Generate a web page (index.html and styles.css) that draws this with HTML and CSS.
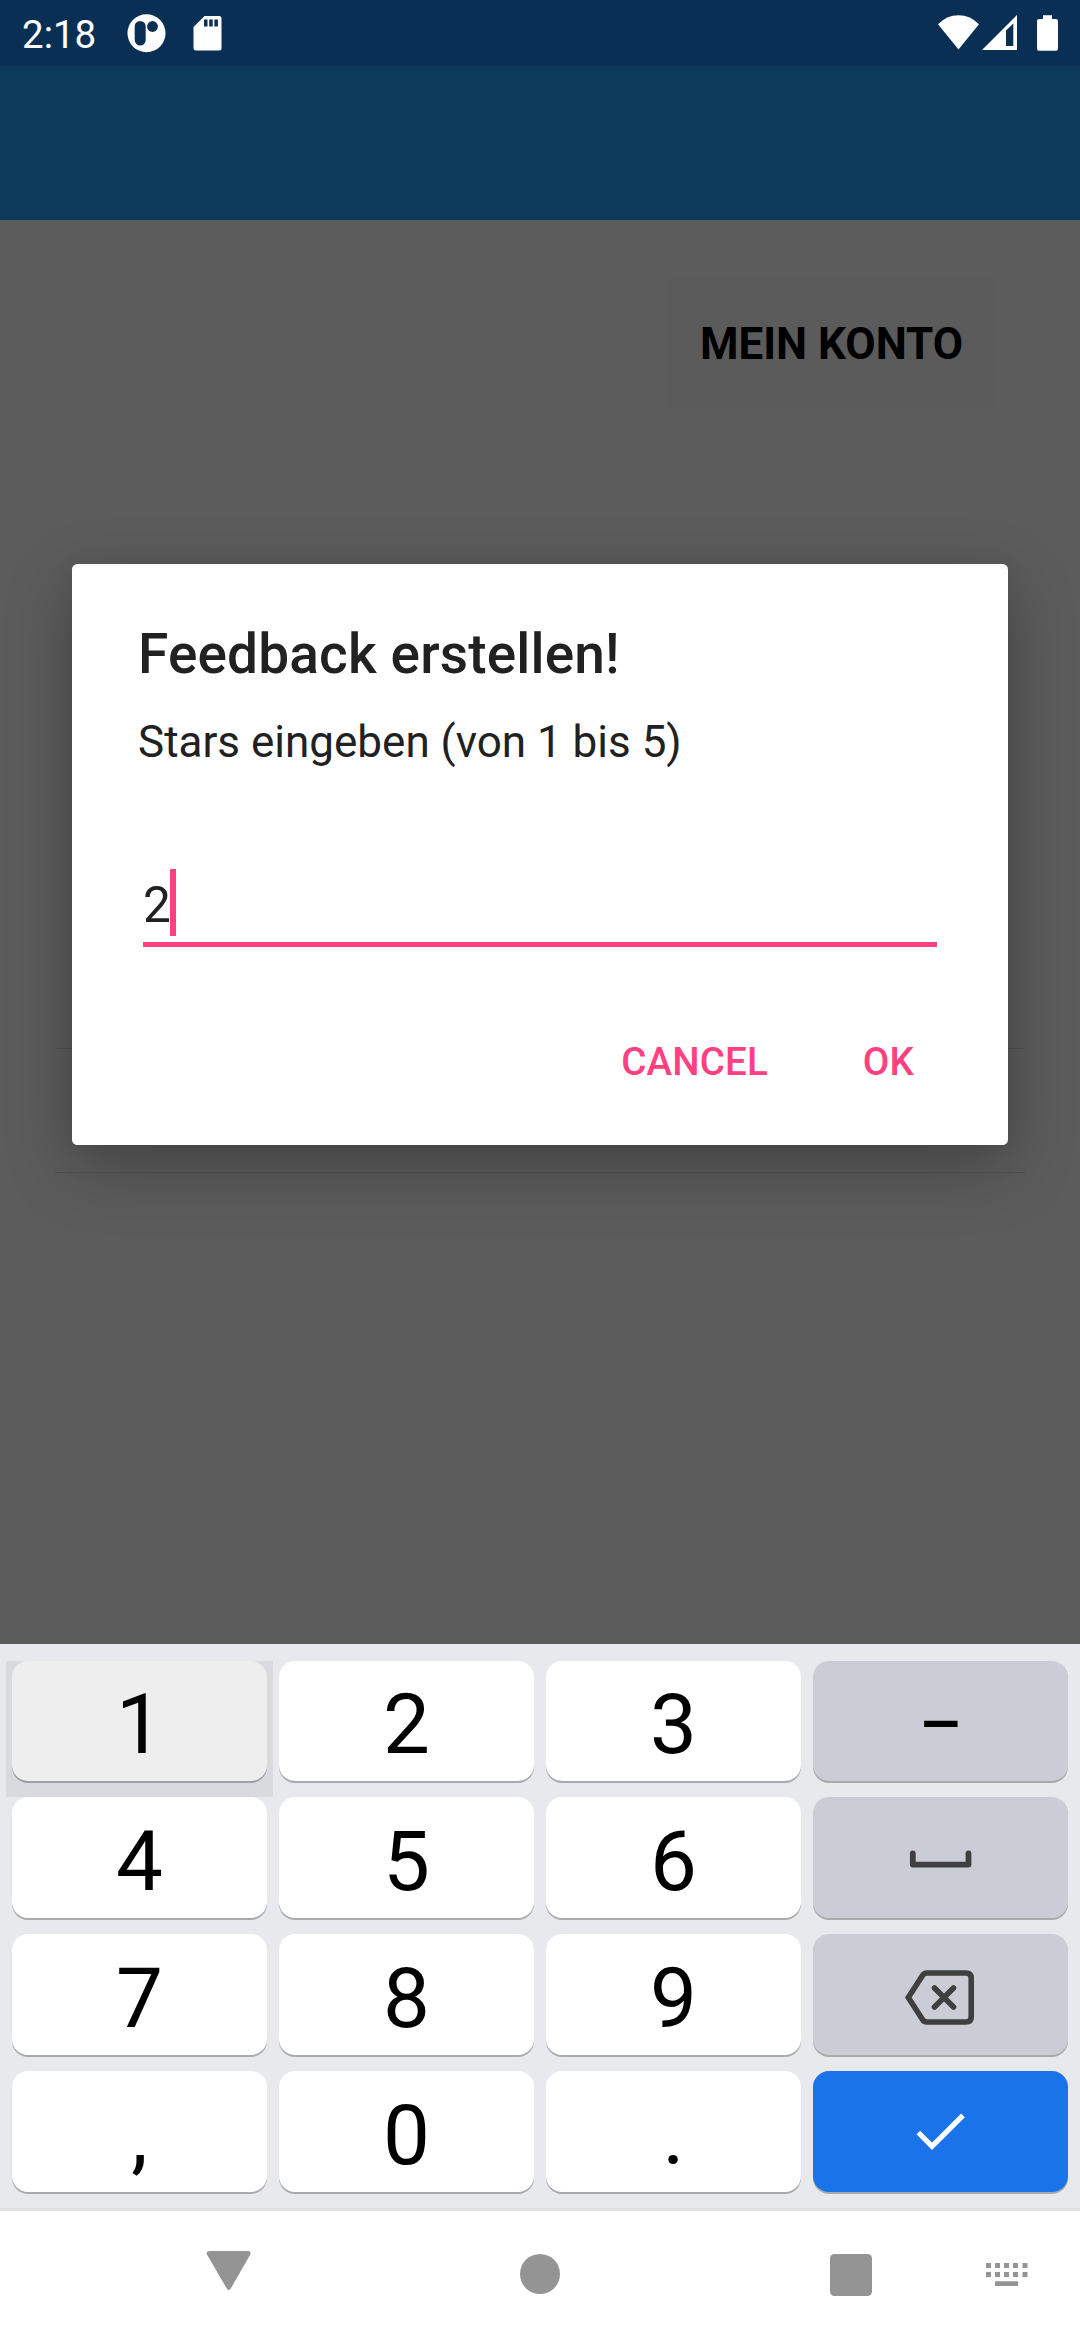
FILE: index.html
```html
<!DOCTYPE html>
<html lang="de">
<head>
<meta charset="utf-8">
<title>Feedback erstellen</title>
<link rel="stylesheet" href="styles.css">
</head>
<body>
<div class="screen">
  <header class="status-bar">
    <span class="clock">2:18</span>
    <svg class="icon-app" width="40" height="40" viewBox="126 13 40 40"><circle cx="146.5" cy="33.2" r="19" fill="#fff"/><rect x="134.7" y="21" width="11" height="24.5" rx="5.5" fill="#0a2f54"/><circle cx="152.5" cy="26.5" r="5.4" fill="#0a2f54"/></svg>
    <svg class="icon-sd" width="30" height="36" viewBox="193 15 30 36"><path d="M204.500 16H219Q221.500 16 221.500 18.500V48Q221.500 50.500 219 50.500H196Q193.500 50.500 193.500 48V27Z" fill="#fff"/><path d="M204 19.500h3.500v7H204zM209.200 19.500h3.500v7h-3.500zM214.400 19.500h3.500v7h-3.500z" fill="#0a2f54"/></svg>
    <svg class="icon-signals" width="124" height="38" viewBox="936 14 124 38"><path d="M958.500 49.500L938 24.300Q946.500 15.200 958.500 15.200T979 24.300Z" fill="#fff"/><path d="M982 50L1017 15V50Z" fill="#fff"/><path d="M1006 30.500L1013.300 23.500V46H1006Z" fill="#0a2f54"/><path d="M1043 15.200H1052V19H1056Q1058 19 1058 21V48.700Q1058 50.700 1056 50.700H1039Q1037 50.700 1037 48.700V21Q1037 19 1039 19H1043Z" fill="#fff"/></svg>
  </header>
  <div class="app-bar"></div>
  <main class="content">
    <div class="account-button">MEIN KONTO</div>
    <div class="list-row"></div>
    <section class="dialog">
      <h1 class="dialog-title">Feedback erstellen!</h1>
      <p class="dialog-message">Stars eingeben (von 1 bis 5)</p>
      <div class="field"><span class="field-value">2</span><span class="caret"></span></div>
      <div class="actions"><span>CANCEL</span><span>OK</span></div>
    </section>
  </main>
  <section class="keyboard">
    <div class="press-area"><div class="key pressed">1</div></div><div class="key">2</div><div class="key">3</div><div class="key side"><span class="dash">–</span></div>
    <div class="key">4</div><div class="key">5</div><div class="key">6</div>
    <div class="key side"><svg width="255" height="121" viewBox="813 1797 255 121"><path d="M912.800 1853.500V1864.600H968.500V1853.500" fill="none" stroke="#3f3f40" stroke-width="5.800" stroke-linecap="round" stroke-linejoin="round"/></svg></div>
    <div class="key">7</div><div class="key">8</div><div class="key">9</div>
    <div class="key side"><svg width="255" height="121" viewBox="813 1934 255 121"><g fill="none" stroke="#3f3f40" stroke-width="5.600"><path d="M908.300 1997.500L922.500 1975.500Q924 1973 927 1973H966Q971.200 1973 971.200 1978V2017Q971.200 2022 966 2022H927Q924 2022 922.500 2019.500Z"/><path d="M934.500 1988L953.500 2007M953.500 1988L934.500 2007" stroke-linecap="round"/></g></svg></div>
    <div class="key">,</div><div class="key">0</div><div class="key">.</div>
    <div class="key enter"><svg width="255" height="121" viewBox="813 2071 255 121"><path d="M918.300 2132.500L932 2146.300L963 2115.300" fill="none" stroke="#fff" stroke-width="5.200"/></svg></div>
  </section>
  <nav class="nav-bar">
    <svg class="nav-back" width="46" height="42" viewBox="206 2250 46 42"><path d="M209 2251H248.500Q251.500 2251.500 250.300 2254.500L230.500 2289Q228.700 2291 227 2289L207 2254.500Q205.700 2251.500 209 2251Z" fill="#949494"/></svg>
    <span class="nav-home"></span>
    <span class="nav-recent"></span>
    <svg class="nav-keyboard" width="42" height="24" viewBox="0 0 42 24"><path d="M0 0h5v5H0zM9 0h5v5H9zM18 0h5v5h-5zM27 0h5v5h-5zM36.500 0h5v5h-5zM0 9h5v5H0zM9 9h5v5H9zM18 9h5v5h-5zM27 9h5v5h-5zM36.500 9h5v5h-5zM9 18.300h23v4.700H9z" fill="#949494"/></svg>
  </nav>
</div>
</body>
</html>
```
FILE: styles.css
```css
* { box-sizing: border-box; }
body { margin: 0; font-family: Roboto, sans-serif; }
svg { display: block; flex: none; }

.screen { width: 1080px; height: 2340px; display: flex; flex-direction: column; overflow: hidden; }

.status-bar { height: 66px; flex: none; display: flex; align-items: flex-start; padding-left: 22px; background: #0a2f54; color: #fff; }
.clock { width: 104px; padding-top: 12px; font-size: 38.5px; line-height: 46px; }
.icon-app { margin-top: 13px; }
.icon-sd { margin: 15px 0 0 27px; }
.icon-signals { margin: 14px 20px 0 auto; }

.app-bar { height: 154px; flex: none; background: #0d3a5b; }

.content { position: relative; flex: 1; min-height: 0; padding-top: 57px; background: #5c5c5c; }
.account-button { width: 328px; height: 130px; margin-left: 667px; padding: 2px 0 0 1px; border-radius: 5px; background: #5b5b5b; color: #000; font-size: 44px; font-weight: 700; line-height: 130px; text-align: center; }
.list-row { height: 125px; margin: 641px 55px 0; border: solid #4f4f4f; border-width: 1px 0; }

.dialog { position: absolute; left: 72px; top: 344px; width: 936px; height: 581px; padding: 58px 66px 0; border-radius: 5.5px; background: #fff; color: #212121; box-shadow: 0 22px 66px rgba(0, 0, 0, .26), 0 0 22px rgba(0, 0, 0, .06); }
.dialog-title { margin: 0; font-size: 55px; font-weight: 500; line-height: 64px; letter-spacing: .15px; }
.dialog-message { margin: 30px 0 0; font-size: 44px; line-height: 52px; }
.field { display: flex; height: 78px; margin: 101px 5px 0; border-bottom: 5.5px solid #ff4081; font-size: 49.5px; line-height: 72px; }
.field-value { width: 27px; }
.caret { width: 6px; height: 67px; background: #ff4081; }
.actions { display: flex; justify-content: flex-end; gap: 95px; margin: 92px 28px 0 0; color: #ff4081; font-size: 38.5px; font-weight: 500; line-height: 46px; letter-spacing: .15px; }

.keyboard { height: 564px; flex: none; display: grid; grid-template-columns: repeat(4, 255px); grid-template-rows: 120px 121px 121px 121px; gap: 16px 12px; padding: 17px 12px 0; background: #e8e9ed; }
.key { display: flex; align-items: center; justify-content: center; padding-top: 8px; border-radius: 16px; background: #fff; box-shadow: 0 2px 0 #a9aaac; color: #000; font-size: 83.5px; line-height: 124px; }
.press-area { margin: 0 -6px -16px; padding: 0 6px; background: #d9dade; }
.key.pressed { height: 120px; background: #eee; box-shadow: 0 2px 0 #9d9fa1; }
.key.side { padding-top: 0; background: #cbcdd6; }
.key.enter { padding-top: 0; background: #1a73e8; }
.dash { padding-top: 6px; font-size: 67px; font-weight: 500; }

.nav-bar { height: 132px; flex: none; display: flex; align-items: flex-start; padding-left: 206px; border-top: 3px solid #e0e1e1; background: #fff; }
.nav-back { margin-top: 39px; }
.nav-home { width: 40px; height: 40px; margin: 43px 0 0 268px; border-radius: 50%; background: #949494; }
.nav-recent { width: 41.5px; height: 41.5px; margin: 43px 0 0 270px; border-radius: 4.5px; background: #949494; }
.nav-keyboard { margin: 52px 0 0 114.5px; }
```
